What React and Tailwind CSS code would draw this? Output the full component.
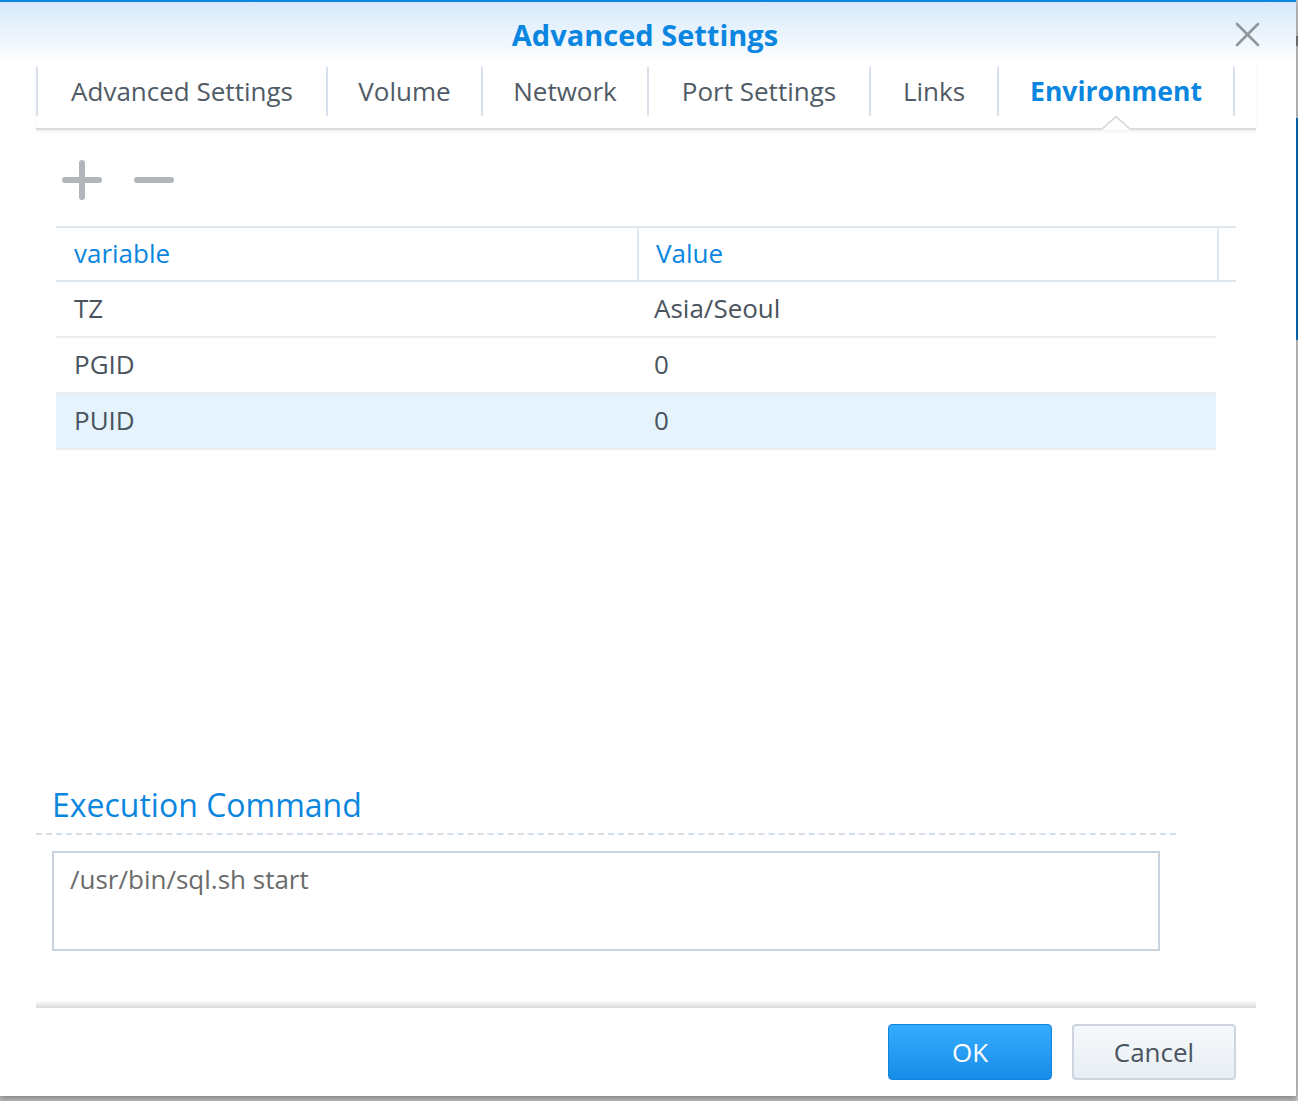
import React from "react";

const tabs = [
  { label: "Advanced Settings", w: "w-[290px]" },
  { label: "Volume", w: "w-[155px]" },
  { label: "Network", w: "w-[166px]" },
  { label: "Port Settings", w: "w-[222px]" },
  { label: "Links", w: "w-[128px]" },
  { label: "Environment", w: "w-[238px]", active: true },
];

const rows = [
  { k: "TZ", v: "Asia/Seoul" },
  { k: "PGID", v: "0" },
  { k: "PUID", v: "0", sel: true },
];

export default function App() {
  return (
    <div
      className="relative w-[1298px] h-[1101px] bg-[#bdbdbd] overflow-hidden flex"
      style={{ fontFamily: '"Open Sans", "Noto Sans", sans-serif' }}
    >
      {/* background scrollbar strip on right */}
      <div className="absolute right-0 top-0 w-[2px] h-full bg-[#c9c9c9]">
        <div className="absolute top-[36px] h-[10px] w-full bg-[#7a7a7a]" />
        <div className="absolute top-[118px] h-[222px] w-full bg-[#0a6fc0]" />
      </div>

      <div className="relative w-[1296px] h-[1096px] bg-white flex flex-col shadow-[0_2px_6px_rgba(0,0,0,0.35)]">
        {/* header */}
        <div className="h-[64px] border-t-[2px] border-[#0b86e3] bg-gradient-to-b from-[#d6e9fa] to-white relative flex items-center justify-center">
          <div className="text-[29px] font-bold text-[#0a86e0] mt-[3px] ml-[-6px]">
            Advanced Settings
          </div>
          <svg
            className="absolute right-[36px] top-[20px]"
            width="25"
            height="25"
            viewBox="0 0 25 25"
          >
            <path
              d="M2 2 L23 23 M23 2 L2 23"
              stroke="#8f969c"
              strokeWidth="2.6"
              strokeLinecap="round"
            />
          </svg>
        </div>

        {/* tabs */}
        <div className="ml-[36px] w-[1220px] h-[66px] relative flex pt-[3px] border-b-[2px] border-[#dcdcdc] shadow-[0_2px_3px_rgba(0,0,0,0.06)]">
          {tabs.map((t, i) => (
            <div
              key={t.label}
              className={`${t.w} h-[49px] flex items-center justify-center border-l-[2px] border-[#d7e1ec] ${
                i === tabs.length - 1 ? "border-r-[2px]" : ""
              } ${
                t.active
                  ? "text-[#0a86e0] font-bold text-[26.5px]"
                  : "text-[#505b66] text-[26px]"
              }`}
            >
              {t.label}
            </div>
          ))}
          <svg
            className="absolute left-[1066px] top-[52px]"
            width="28"
            height="14"
            viewBox="0 0 28 14"
          >
            <path d="M0 14 L14 0 L28 14 Z" fill="white" />
            <path
              d="M0 13 L14 0.5 L28 13"
              fill="none"
              stroke="#d4d4d4"
              strokeWidth="1.5"
            />
          </svg>
        </div>

        {/* body */}
        <div className="flex-1 flex flex-col">
          {/* toolbar */}
          <div className="h-[96px] flex items-center pl-[62px] gap-[32px] pt-[3px]">
            <svg width="40" height="40" viewBox="0 0 40 40">
              <path
                d="M20 3 V37 M3 20 H37"
                stroke="#b2b6bb"
                strokeWidth="6"
                strokeLinecap="round"
              />
            </svg>
            <svg width="40" height="40" viewBox="0 0 40 40">
              <path
                d="M3 20 H37"
                stroke="#b2b6bb"
                strokeWidth="6"
                strokeLinecap="round"
              />
            </svg>
          </div>

          {/* table */}
          <div className="ml-[56px] w-[1180px]">
            <div className="flex h-[56px] border-y-[2px] border-[#dfe7f0] text-[26px] text-[#0a86e0]">
              <div className="w-[581px] pl-[18px] flex items-center pb-[2px]">variable</div>
              <div className="w-[580px] pl-[17px] flex items-center border-l-[2px] border-[#dfe7f0] pb-[2px]">
                Value
              </div>
              <div className="flex-1 border-l-[2px] border-[#dfe7f0]" />
            </div>
            {rows.map((r) => (
              <div
                key={r.k}
                className={`w-[1160px] flex h-[56px] border-b-[2px] border-[#e9eef3] text-[26px] text-[#4a545e] ${
                  r.sel ? "bg-[#e5f3fd] border-[#e5f3fd]" : ""
                }`}
              >
                <div className="w-[581px] pl-[18px] flex items-center pb-[2px]">{r.k}</div>
                <div className="flex-1 pl-[17px] flex items-center pb-[2px]">{r.v}</div>
              </div>
            ))}
          </div>

          {/* execution command */}
          <div className="mt-[333px] ml-[36px]">
            <div className="pl-[16px] text-[32px] text-[#0a86e0] leading-[44px]">
              Execution Command
            </div>
            <div className="mt-[6px] w-[1140px] border-t-[2px] border-dashed border-[#d5dfea]" />
            <div className="mt-[16px] ml-[16px] w-[1108px] h-[100px] border-[2px] border-[#c9d3de] px-[16px] pt-[7px] text-[26px] text-[#6b6b6b]">
              /usr/bin/sql.sh start
            </div>
          </div>
        </div>

        {/* footer */}
        <div className="ml-[36px] w-[1220px] h-[8px] bg-gradient-to-b from-white to-[#e6e6e6] border-b-[2px] border-[#dedede]" />
        <div className="h-[88px] flex justify-end items-start pt-[16px] pr-[60px] gap-[20px]">
          <button className="w-[164px] h-[56px] rounded-[4px] border-[1px] border-[#1384dc] bg-gradient-to-b from-[#35acff] to-[#168de8] text-white text-[26px] flex items-center justify-center">
            OK
          </button>
          <button className="w-[164px] h-[56px] rounded-[4px] border-[2px] border-[#cdd6e0] bg-gradient-to-b from-[#f6f9fc] to-[#e8eef4] text-[#4a545e] text-[26px] flex items-center justify-center">
            Cancel
          </button>
        </div>
      </div>
    </div>
  );
}
